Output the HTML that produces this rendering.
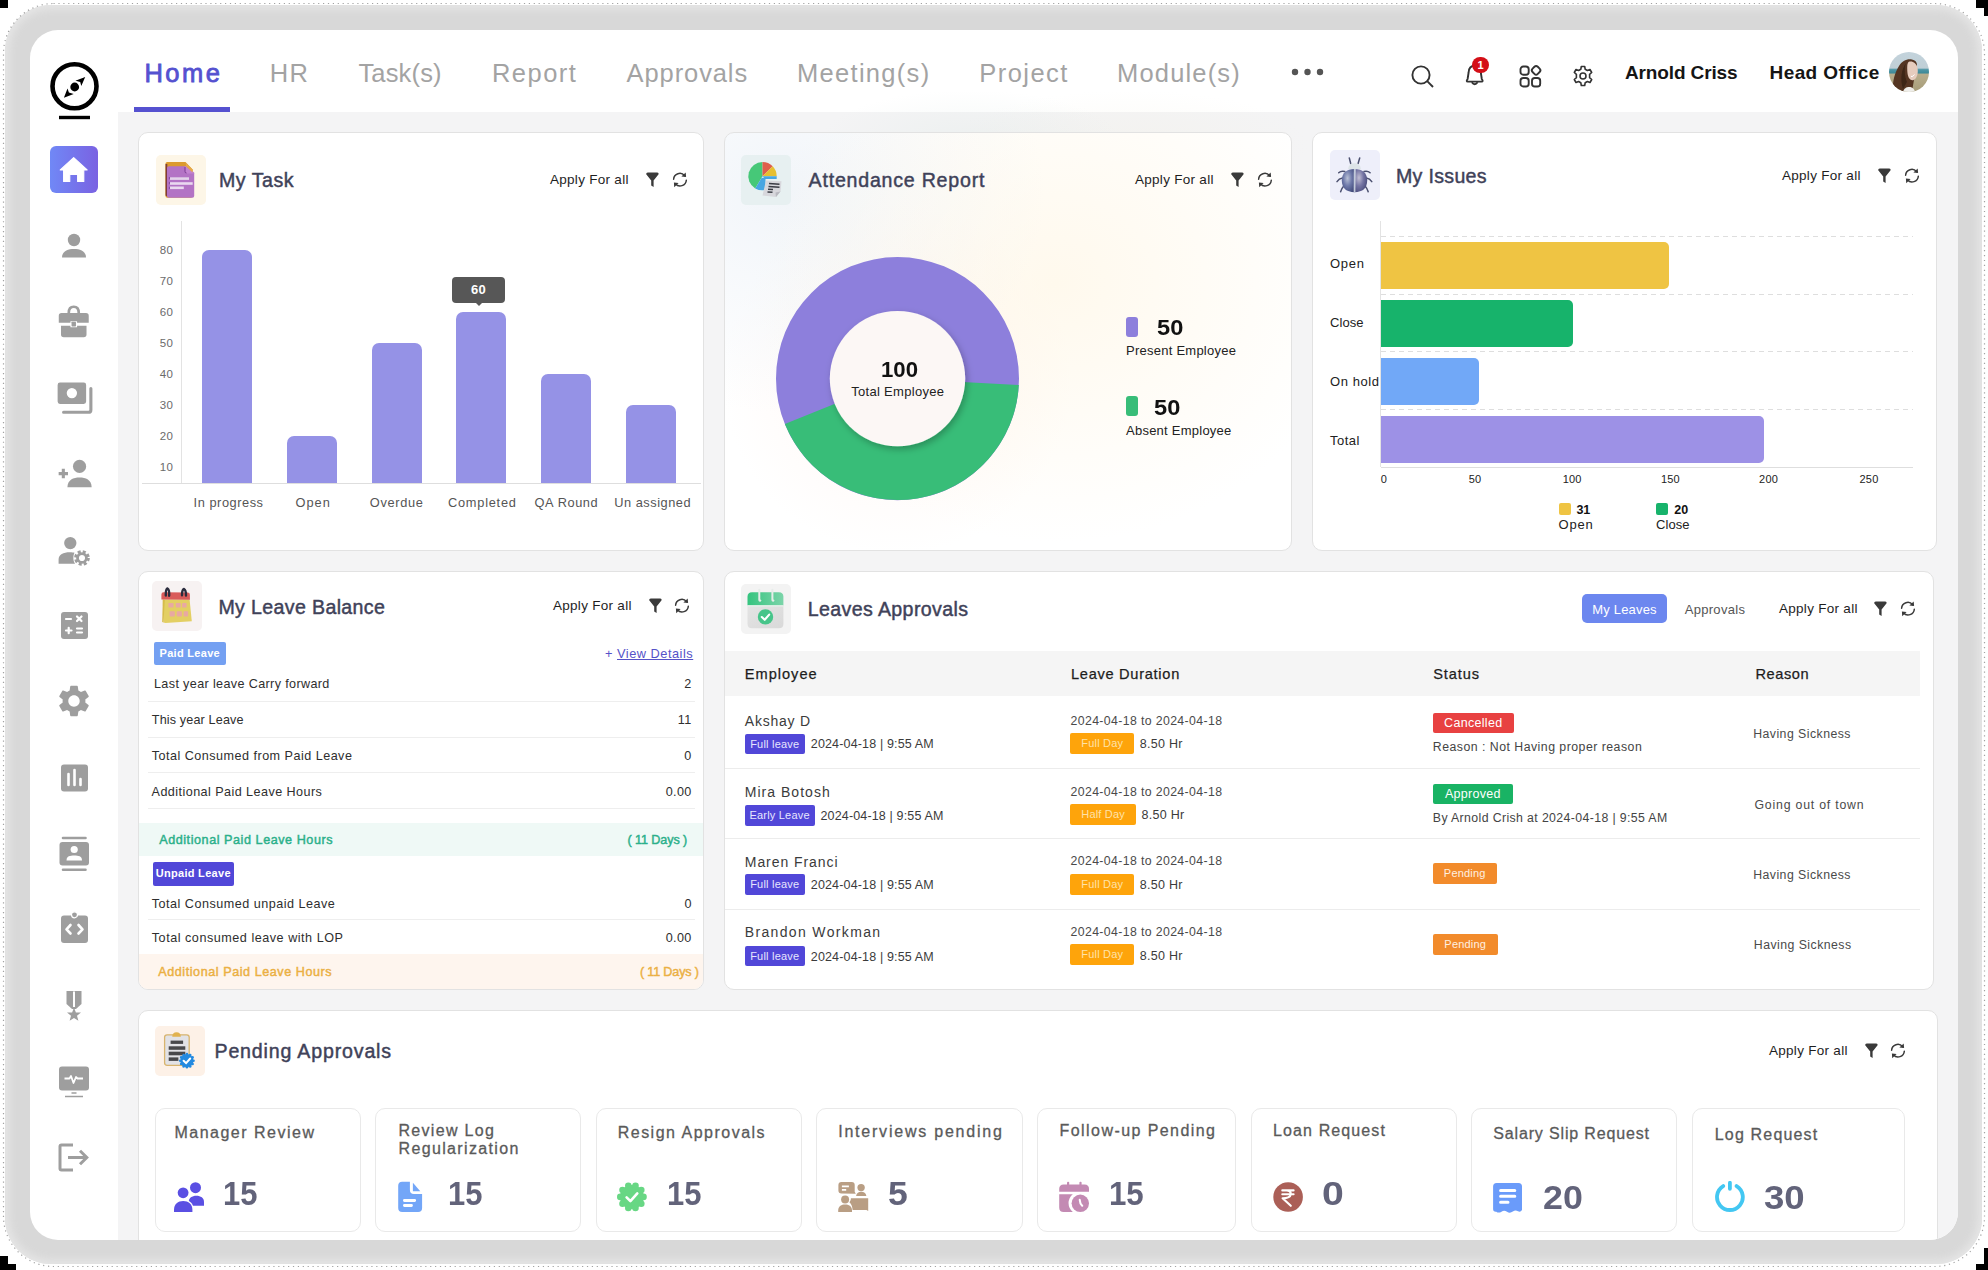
<!DOCTYPE html><html><head><meta charset="utf-8"><style>
*{margin:0;padding:0;box-sizing:border-box}
html,body{width:1988px;height:1270px;overflow:hidden;background:#fff;font-family:"Liberation Sans",sans-serif}
.a{position:absolute}
.t{position:absolute;white-space:nowrap}
.m{-webkit-text-stroke:0.35px currentColor}
.card{position:absolute;background:#fff;border:1px solid #e2e2e2;border-radius:10px}
.ibox{position:absolute;width:50px;height:50px;border-radius:5px}
</style></head><body>
<div class="a" style="left:5px;top:5px;width:1977px;height:1259px;border-radius:46px;background:#d8d8d8;box-shadow:inset 0 0 8px 4px #e6e6e6"></div>
<svg class="a" style="left:0;top:0" width="1988" height="1270"><rect x="3.5" y="3.5" width="1981" height="1263" rx="50" fill="none" stroke="#555" stroke-width="1.2" stroke-dasharray="1.2 3.7" opacity="0.55"/></svg>
<div class="a" style="left:0;top:0;width:8px;height:8px;background:#000"></div>
<div class="a" style="left:1984px;top:1248px;width:4px;height:22px;background:#000"></div><div class="a" style="left:1976px;top:1264px;width:12px;height:6px;background:#000"></div><div class="a" style="left:1976px;top:0;width:12px;height:8px;background:#000"></div><div class="a" style="left:1984px;top:8px;width:4px;height:8px;background:#000"></div><div class="a" style="left:0;top:1256px;width:8px;height:14px;background:#000"></div><div class="a" style="left:8px;top:1264px;width:8px;height:6px;background:#000"></div>
<div class="a" style="left:30px;top:30px;width:1928px;height:1210px;border-radius:28px;background:#fff;overflow:hidden"><div class="a" style="left:-30px;top:-30px;width:1988px;height:1270px">
<div class="a" style="left:118px;top:112px;width:1840px;height:1128px;background:#f4f4f5"></div>
<div class="a" style="left:800px;top:70px;width:520px;height:110px;background:radial-gradient(ellipse 150px 50px at 170px 70px,rgba(215,228,224,0.25) 0%,rgba(255,255,255,0) 100%),radial-gradient(ellipse 180px 55px at 330px 75px,rgba(240,236,220,0.25) 0%,rgba(255,255,255,0) 100%)"></div>
<!-- sidebar -->
<svg class="a" style="left:44px;top:56px" width="62" height="68" viewBox="0 0 62 68">
 <circle cx="30.5" cy="30.2" r="22" fill="none" stroke="#000" stroke-width="4.6"/>
 <path d="M41.2 20.9 L31.4 24.7 L36.2 25.9 L37.3 30 Z M19.9 41.8 L23.5 32.4 L24.9 36.5 L29.7 38 Z" fill="#000"/>
 <circle cx="30.7" cy="31" r="5.9" fill="#fff"/>
 <circle cx="30.7" cy="31" r="4.4" fill="#000"/>
 <rect x="15" y="59.8" width="31" height="3.4" fill="#000"/>
</svg>
<div class="a" style="left:50px;top:146px;width:48px;height:47px;border-radius:6px;background:linear-gradient(90deg,#7088f6,#7a62e2)"></div>
<svg class="a" style="left:58.3px;top:154px" width="31.4" height="31.4" viewBox="0 0 28 28"><path d="M14 3.2 L26 14.2 L23 14.2 L23 24.5 L17.5 24.5 L17.5 18.2 L10.5 18.2 L10.5 24.5 L5 24.5 L5 14.2 L2 14.2 Z" fill="#fff" stroke="#fff" stroke-width="1" stroke-linejoin="round"/></svg>
<svg class="a" style="left:58px;top:230px" width="32" height="32" viewBox="0 0 32 32" fill="#9e9e9e"><circle cx="16" cy="10" r="6.2"/><path d="M4 27.5 C4 21 10 19 16 19 C22 19 28 21 28 27.5 Z"/></svg>
<svg class="a" style="left:56px;top:303.5px" width="35.5" height="35.5" viewBox="0 0 32 32" fill="#9e9e9e"><path d="M11.5 8 C11.5 4 13.5 2.5 16 2.5 C18.5 2.5 20.5 4 20.5 8" fill="none" stroke="#9e9e9e" stroke-width="2.4"/><path d="M2.5 10.5 Q2.5 8 5 8 L27 8 Q29.5 8 29.5 10.5 L29.5 17 L19 17 L19 15.5 L13 15.5 L13 17 L2.5 17 Z"/><path d="M4.5 19.5 L13 19.5 L13 21 L19 21 L19 19.5 L27.5 19.5 L27.5 27.5 Q27.5 30 25 30 L7 30 Q4.5 30 4.5 27.5 Z"/><rect x="14" y="16" width="4" height="4.2" rx="0.5"/></svg>
<svg class="a" style="left:54px;top:378.5px" width="40.5" height="38" viewBox="0 0 34 32" fill="#9e9e9e"><path d="M3 5 Q3 3 5 3 L25 3 Q27 3 27 5 L27 19 Q27 21 25 21 L5 21 Q3 21 3 19 Z M15 7.5 A4.3 4.3 0 1 0 15 16.2 A4.3 4.3 0 1 0 15 7.5 Z" fill-rule="evenodd"/><path d="M31 8 L31 26 Q31 28 29 28 L8 28" fill="none" stroke="#9e9e9e" stroke-width="2.6" stroke-linecap="round"/></svg>
<svg class="a" style="left:56.5px;top:455.5px" width="39.6" height="35.2" viewBox="0 0 36 32" fill="#9e9e9e"><circle cx="20.5" cy="9.5" r="6"/><path d="M9.5 28.5 C9.5 21.5 15 19.5 20.5 19.5 C26 19.5 31.5 21.5 31.5 28.5 Z"/><path d="M1.5 16 L10 16 M5.75 11.7 L5.75 20.3" stroke="#9e9e9e" stroke-width="2.8"/></svg>
<svg class="a" style="left:57px;top:533px" width="34" height="34" viewBox="0 0 32 32" fill="#9e9e9e"><circle cx="12.5" cy="9.5" r="5.8"/><path d="M1.5 29 L1.5 25 C1.5 20 6 18 12 18 C14 18 15.5 18.2 16.5 18.5 C15 21 15 26 17 29 Z"/><g transform="translate(23.5,23.5)"><circle r="5.6" fill="none" stroke="#9e9e9e" stroke-width="3.6" stroke-dasharray="2.6 1.8"/><circle r="4.2" fill="none" stroke="#9e9e9e" stroke-width="2.6"/></g></svg>
<svg class="a" style="left:58px;top:609px" width="32" height="32" viewBox="0 0 32 32" fill="#9e9e9e"><rect x="3" y="3" width="27" height="27" rx="3"/><g stroke="#fff" stroke-width="2.2" stroke-linecap="round"><path d="M8 10 L13 10 M19 7.5 L23.5 12 M23.5 7.5 L19 12 M8 21.5 L13.5 21.5 M10.7 18.8 L10.7 24.2 M19 19.5 L24 19.5 M19 23.5 L24 23.5"/></g></svg>
<svg class="a" style="left:55px;top:682px" width="38" height="38" viewBox="0 0 24 24" fill="#9e9e9e"><path d="M19.14 12.94c.04-.3.06-.61.06-.94 0-.32-.02-.64-.07-.94l2.03-1.58a.49.49 0 0 0 .12-.61l-1.92-3.32a.488.488 0 0 0-.59-.22l-2.39.96c-.5-.38-1.03-.7-1.62-.94l-.36-2.54a.484.484 0 0 0-.48-.41h-3.84c-.24 0-.43.17-.47.41l-.36 2.54c-.59.24-1.13.57-1.62.94l-2.39-.96c-.22-.08-.47 0-.59.22L2.74 8.87c-.12.21-.08.47.12.61l2.03 1.58c-.05.3-.09.63-.09.94s.02.64.07.94l-2.03 1.58a.49.49 0 0 0-.12.61l1.92 3.32c.12.22.37.29.59.22l2.39-.96c.5.38 1.03.7 1.62.94l.36 2.54c.05.24.24.41.48.41h3.84c.24 0 .44-.17.47-.41l.36-2.54c.59-.24 1.13-.56 1.62-.94l2.39.96c.22.08.47 0 .59-.22l1.92-3.32c.12-.22.07-.47-.12-.61l-2.01-1.58zM12 15.6c-1.98 0-3.6-1.62-3.6-3.6s1.62-3.6 3.6-3.6 3.6 1.62 3.6 3.6-1.62 3.6-3.6 3.6z"/></svg>
<svg class="a" style="left:58px;top:762px" width="32" height="32" viewBox="0 0 32 32" fill="#9e9e9e"><rect x="3" y="2.5" width="27" height="27" rx="3"/><g stroke="#fff" stroke-width="2.6" stroke-linecap="round"><path d="M10.5 12 L10.5 23 M16.5 8 L16.5 23 M22.5 17 L22.5 23"/></g></svg>
<svg class="a" style="left:58px;top:836px" width="32" height="36" viewBox="0 0 32 36" fill="#9e9e9e"><rect x="1.5" y="6" width="29.5" height="23.5" rx="3"/><path d="M5 2 L27.5 2 M5 33.8 L27.5 33.8" stroke="#9e9e9e" stroke-width="2.6" stroke-linecap="round"/><circle cx="16.2" cy="13.5" r="3.6" fill="#fff"/><path d="M8.5 24.5 C8.5 20 12 19.5 16.2 19.5 C20.5 19.5 24 20 24 24.5 Z" fill="#fff"/></svg>
<svg class="a" style="left:58px;top:911px" width="32" height="34" viewBox="0 0 32 34" fill="#9e9e9e"><rect x="3" y="4.5" width="27" height="27.5" rx="3"/><circle cx="16.5" cy="3.8" r="3" fill="#9e9e9e" stroke="#fff" stroke-width="1.2"/><path d="M12.5 14 L8.5 18.3 L12.5 22.5 M20.5 14 L24.5 18.3 L20.5 22.5" fill="none" stroke="#fff" stroke-width="2.6" stroke-linecap="round" stroke-linejoin="round"/></svg>
<svg class="a" style="left:62px;top:990px" width="24" height="32" viewBox="0 0 24 32" fill="#9e9e9e"><path d="M4.5 1 L19.5 1 L19.5 14 L14 19 L10 19 L4.5 14 Z"/><path d="M11 1.5 L13 1.5 L13 17 L11 17 Z" fill="#fff"/><path d="M12 17.5 L13.9 22.5 L19 22.6 L15 25.8 L16.4 30.8 L12 28 L7.6 30.8 L9 25.8 L5 22.6 L10.1 22.5 Z"/></svg>
<svg class="a" style="left:58px;top:1066px" width="32" height="32" viewBox="0 0 32 32" fill="#9e9e9e"><rect x="1" y="0.5" width="30" height="24" rx="3"/><path d="M6.5 12.5 L11.5 12.5 L13 10 L15.5 17 L18 11 L19.5 12.5 L25 12.5" fill="none" stroke="#fff" stroke-width="1.8" stroke-linejoin="round"/><path d="M13.5 27 L18.5 27 M7 30.5 L25 30.5" stroke="#9e9e9e" stroke-width="1.7"/></svg>
<svg class="a" style="left:58px;top:1143px" width="32" height="30" viewBox="0 0 32 30" fill="none" stroke="#9e9e9e" stroke-width="3"><path d="M15 2 L3.5 2 Q2 2 2 3.5 L2 25.5 Q2 27 3.5 27 L15 27"/><path d="M10 14.5 L29 14.5 M22 7.8 L28.8 14.5 L22 21.2" stroke-linejoin="miter"/></svg>

<div class="t" style="top:57.6px;font-size:25.5px;color:#5551d0;line-height:30px;letter-spacing:2.467px;left:144.4px;-webkit-text-stroke:0.8px #5551d0">Home</div>
<div class="t" style="top:57.6px;font-size:25.5px;color:#a3a3a3;line-height:30px;letter-spacing:1.2px;left:269.8px;">HR</div>
<div class="t" style="top:57.6px;font-size:25.5px;color:#a3a3a3;line-height:30px;letter-spacing:0.167px;left:358.4px;">Task(s)</div>
<div class="t" style="top:57.6px;font-size:25.5px;color:#a3a3a3;line-height:30px;letter-spacing:1.5px;left:491.9px;">Report</div>
<div class="t" style="top:57.6px;font-size:25.5px;color:#a3a3a3;line-height:30px;letter-spacing:0.9px;left:626.6px;">Approvals</div>
<div class="t" style="top:57.6px;font-size:25.5px;color:#a3a3a3;line-height:30px;letter-spacing:1.3px;left:797.0px;">Meeting(s)</div>
<div class="t" style="top:57.6px;font-size:25.5px;color:#a3a3a3;line-height:30px;letter-spacing:1.433px;left:979.3px;">Project</div>
<div class="t" style="top:57.6px;font-size:25.5px;color:#a3a3a3;line-height:30px;letter-spacing:1.15px;left:1117.1px;">Module(s)</div>
<div class="a" style="left:134px;top:107px;width:96px;height:5px;background:#5551d0"></div>
<svg class="a" style="left:1290px;top:66px" width="36" height="12"><circle cx="5" cy="6" r="3.2" fill="#555"/><circle cx="17.5" cy="6" r="3.2" fill="#555"/><circle cx="30" cy="6" r="3.2" fill="#555"/></svg>
<svg class="a" style="left:1408px;top:62px" width="30" height="30" viewBox="0 0 30 30" fill="none" stroke="#333" stroke-width="1.9"><circle cx="13" cy="13" r="8.6"/><path d="M19.2 19.2 L25 25" stroke-linecap="butt"/></svg>
<svg class="a" style="left:1460px;top:55px" width="36" height="36" viewBox="0 0 36 36" fill="none" stroke="#333" stroke-width="1.9" stroke-linejoin="round"><path d="M7.6 24 L8.6 17.5 C8.8 12.8 11.2 10.8 14.7 10.8 C18.2 10.8 20.6 12.8 20.8 17.5 L21.8 24 Q23.6 26.6 21.6 26.6 L7.8 26.6 Q5.8 26.6 7.6 24 Z"/><path d="M11.8 27.2 Q14.7 31.2 17.6 27.2"/></svg>
<div class="a" style="left:1472.2px;top:56.5px;width:16.6px;height:16.6px;border-radius:50%;background:#d40f17;color:#fff;font-size:11px;font-weight:bold;line-height:16.6px;text-align:center">1</div>
<svg class="a" style="left:1517px;top:63px" width="28" height="28" viewBox="0 0 28 28" fill="none" stroke="#333" stroke-width="1.9"><rect x="3.5" y="3.5" width="8.2" height="8.2" rx="2.8"/><rect x="3.5" y="15" width="8.2" height="8.5" rx="2.8"/><rect x="15" y="15" width="8.2" height="8.5" rx="2.8"/><rect x="15.4" y="3.6" width="7.4" height="7.4" rx="2.4" transform="rotate(45 19.1 7.3)"/></svg>
<svg class="a" style="left:1571px;top:64px" width="24" height="24" viewBox="0 0 24 24" fill="none" stroke="#333" stroke-width="1.6" stroke-linejoin="round"><path d="M10.3 2.5 L13.7 2.5 L14.2 5.3 L16.4 6.5 L19 5.5 L20.7 8.5 L18.6 10.3 L18.6 13.7 L20.7 15.5 L19 18.5 L16.4 17.5 L14.2 18.7 L13.7 21.5 L10.3 21.5 L9.8 18.7 L7.6 17.5 L5 18.5 L3.3 15.5 L5.4 13.7 L5.4 10.3 L3.3 8.5 L5 5.5 L7.6 6.5 L9.8 5.3 Z"/><circle cx="12" cy="12" r="3"/></svg>
<div class="t" style="top:60.6px;font-size:19px;color:#151515;line-height:24px;font-weight:bold;letter-spacing:-0.127px;left:1625px;">Arnold Criss</div>
<div class="t" style="top:60.6px;font-size:19px;color:#151515;line-height:24px;font-weight:bold;letter-spacing:0.42px;left:1769.5px;">Head Office</div>
<svg class="a" style="left:1889px;top:52px" width="40" height="40" viewBox="0 0 40 40"><defs><clipPath id="avc"><circle cx="20" cy="20" r="20"/></clipPath>
<linearGradient id="avsky" x1="0" y1="0" x2="0" y2="1"><stop offset="0" stop-color="#c3d3dc"/><stop offset="0.40" stop-color="#c0cfd6"/><stop offset="0.44" stop-color="#4f96a6"/><stop offset="0.52" stop-color="#3f8a98"/><stop offset="0.56" stop-color="#b8ad8c"/><stop offset="1" stop-color="#a69c78"/></linearGradient>
<filter id="avb"><feGaussianBlur stdDeviation="0.5"/></filter></defs>
<g clip-path="url(#avc)"><rect width="40" height="40" fill="url(#avsky)"/>
<g filter="url(#avb)">
<path d="M4 40 C3 30 6 20 10 14 C13 9 18 6.5 23 7.5 C26 8 28 10 28 13 L26 22 C25 28 24 33 23 40 Z" fill="#553624"/>
<path d="M19.5 10 C23 8.5 27.5 11 28.5 16 C29.5 21 28 26.5 24.5 28 C21.5 29 19 26 18.5 21 C18 16 18 11.5 19.5 10 Z" fill="#e6ccbd"/>
<path d="M17 11 C15 16 15.5 24 18 30 L14 37 C11 29 12 17 17 11 Z" fill="#3e2618"/>
<path d="M25.5 22.5 Q24 25 22 24.5" stroke="#fff" stroke-width="1" fill="none"/>
<path d="M14 40 C15 35.5 18.5 34.5 21.5 35 C24 35.5 25.5 37.5 26 40 Z" fill="#efeeea"/>
</g></g></svg>
<div class="card" style="left:138px;top:132px;width:566px;height:419px;"></div>
<div class="ibox" style="left:156px;top:155px;background:#fdf6e7"></div>
<svg class="a" style="left:156px;top:155px" width="50" height="50" viewBox="0 0 50 50">
<path d="M9.4 9 Q9.4 7 11.4 7 L29.5 7 L36.7 14.5 L36.7 40.5 Q36.7 42.7 34.5 42.7 L11.4 42.7 Q9.4 42.7 9.4 40.7 Z" fill="#dc9a2e"/>
<path d="M9.6 9 L11.3 9 L11.3 41.5 L9.6 40.5 Z" fill="#7c3b3a"/>
<path d="M11 13 Q11 11.3 12.8 11.3 L29 11.3 L38.2 18.1 L38.2 40.9 Q38.2 42.7 36.4 42.7 L12.8 42.7 Q11 42.7 11 40.9 Z" fill="#b373c5"/>
<path d="M28.6 11.3 L29.8 11.3 L38.2 17.4 L38.2 18.4 L30.6 18.4 Q28.6 18.4 28.6 16.4 Z" fill="#c383d1"/>
<path d="M29 12 L29 16.5 Q29 18 30.5 18" fill="none" stroke="#6d3088" stroke-width="0.9"/>
<path d="M29.8 8 L36.5 14.6 L36.5 17.4 L30 11.3 Z" fill="#e6a94a"/>
<rect x="14" y="22.3" width="19" height="2.6" fill="#e3d2ea"/><rect x="14" y="27.2" width="22.7" height="2.6" fill="#ead9f0"/><rect x="14" y="31.5" width="13.8" height="2.6" fill="#ead9f0"/>
<path d="M13.4 22 L13.4 34.5" stroke="#7a3f99" stroke-width="0.8" stroke-dasharray="2.3 2.6"/>
</svg>
<div class="t" style="top:167.3px;font-size:19.6px;color:#3f4259;line-height:26px;letter-spacing:0.517px;left:219px;-webkit-text-stroke:0.45px #3f4259">My Task</div>
<div class="t" style="top:170.3px;font-size:13.5px;color:#1e1e1e;line-height:20px;letter-spacing:0.283px;left:550px;">Apply For all</div>
<svg class="a" style="left:645px;top:172.3px" width="15" height="16" viewBox="0 0 15 16"><path d="M1.2 2.2 Q1 0.5 2.8 0.5 L12.2 0.5 Q14 0.5 13.6 2.2 L8.6 8.5 L8.6 15 L6.2 13.6 L6.2 8.5 Z" fill="#3a3a3a"/></svg>
<svg class="a" style="left:672px;top:172.3px" width="16" height="16" viewBox="0 0 16 16"><g fill="none" stroke="#3a3a3a" stroke-width="1.5" stroke-linecap="round"><path d="M1.6 7.2 A6.2 6.2 0 0 1 12.6 3.7"/><path d="M14.3 8.2 A6.2 6.2 0 0 1 3.4 11.8"/></g><path d="M13.7 0.4 L14.1 5 L9.4 4.5 Z" fill="#3a3a3a"/><path d="M2.2 15.2 L1.9 10.6 L6.6 11 Z" fill="#3a3a3a"/></svg>
<div class="a" style="left:181px;top:221px;width:1px;height:262px;background:#e3e3e3"></div>
<div class="a" style="left:142px;top:483px;width:559px;height:1px;background:#dedede"></div>
<div class="t" style="top:460.0px;font-size:11.5px;color:#6b6b6b;line-height:14px;letter-spacing:0.2px;right:1815px;">10</div>
<div class="t" style="top:429.0px;font-size:11.5px;color:#6b6b6b;line-height:14px;letter-spacing:0.2px;right:1815px;">20</div>
<div class="t" style="top:398.0px;font-size:11.5px;color:#6b6b6b;line-height:14px;letter-spacing:0.2px;right:1815px;">30</div>
<div class="t" style="top:367.0px;font-size:11.5px;color:#6b6b6b;line-height:14px;letter-spacing:0.2px;right:1815px;">40</div>
<div class="t" style="top:336.0px;font-size:11.5px;color:#6b6b6b;line-height:14px;letter-spacing:0.2px;right:1815px;">50</div>
<div class="t" style="top:305.0px;font-size:11.5px;color:#6b6b6b;line-height:14px;letter-spacing:0.2px;right:1815px;">60</div>
<div class="t" style="top:274.0px;font-size:11.5px;color:#6b6b6b;line-height:14px;letter-spacing:0.2px;right:1815px;">70</div>
<div class="t" style="top:243.0px;font-size:11.5px;color:#6b6b6b;line-height:14px;letter-spacing:0.2px;right:1815px;">80</div>
<div class="a" style="left:202px;top:250.0px;width:50px;height:233.0px;background:#9592e6;border-radius:7px 7px 0 0"></div>
<div class="t" style="top:494.0px;font-size:12.8px;color:#555;line-height:18px;letter-spacing:0.54px;left:193.6px;">In progress</div>
<div class="a" style="left:287px;top:436.0px;width:50px;height:47.0px;background:#9592e6;border-radius:7px 7px 0 0"></div>
<div class="t" style="top:494.0px;font-size:12.8px;color:#555;line-height:18px;letter-spacing:1.033px;left:295.4px;">Open</div>
<div class="a" style="left:372px;top:343.0px;width:50px;height:140.0px;background:#9592e6;border-radius:7px 7px 0 0"></div>
<div class="t" style="top:494.0px;font-size:12.8px;color:#555;line-height:18px;letter-spacing:0.667px;left:369.8px;">Overdue</div>
<div class="a" style="left:456px;top:312.0px;width:50px;height:171.0px;background:#9592e6;border-radius:7px 7px 0 0"></div>
<div class="t" style="top:494.0px;font-size:12.8px;color:#555;line-height:18px;letter-spacing:0.75px;left:448px;">Completed</div>
<div class="a" style="left:541px;top:374.0px;width:50px;height:109.0px;background:#9592e6;border-radius:7px 7px 0 0"></div>
<div class="t" style="top:494.0px;font-size:12.8px;color:#555;line-height:18px;letter-spacing:0.571px;left:534.6px;">QA Round</div>
<div class="a" style="left:626px;top:405.0px;width:50px;height:78.0px;background:#9592e6;border-radius:7px 7px 0 0"></div>
<div class="t" style="top:494.0px;font-size:12.8px;color:#555;line-height:18px;letter-spacing:0.51px;left:614.3px;">Un assigned</div>
<div class="a" style="left:452px;top:277px;width:53px;height:26px;border-radius:4px;background:#575757"></div>
<div class="a" style="left:474px;top:301px;width:0;height:0;border-left:5px solid transparent;border-right:5px solid transparent;border-top:5px solid #575757"></div>
<div class="t" style="top:281.0px;font-size:13px;color:#fff;line-height:18px;font-weight:bold;letter-spacing:0.3px;left:178.5px;width:600px;text-align:center;">60</div>
<div class="card" style="left:724px;top:132px;width:568px;height:419px;background:radial-gradient(ellipse 300px 260px at 330px 150px,rgba(255,244,222,0.55) 0%,rgba(255,255,255,0) 100%),radial-gradient(ellipse 260px 220px at 60px 60px,rgba(240,244,249,0.9) 0%,rgba(255,255,255,0) 100%),radial-gradient(circle 175px at 172px 246px,rgba(255,236,228,0.45) 0%,rgba(255,255,255,0) 100%),#fff"></div>
<div class="ibox" style="left:741px;top:155px;background:#e7f0f1"></div>
<svg class="a" style="left:740.7px;top:155px" width="50" height="50" viewBox="0 0 50 50">
<path d="M21.5 21.2 L21.5 7 A14.2 14.2 0 0 0 14.2 33.4 Z" fill="#46c878"/>
<path d="M21.5 21.2 L21.5 7 A14.2 14.2 0 0 1 31.7 11.3 Z" fill="#df5f4c"/>
<path d="M21.5 21.2 L31.7 11.3 A14.2 14.2 0 0 1 35.7 21.2 Z" fill="#e7bf30"/>
<path d="M21.5 21.2 L35.7 21.2 L35.7 24 L24.5 24 L24.5 35 A14.2 14.2 0 0 1 14.2 33.4 Z" fill="#48a6e2"/>
<path d="M20.8 23 L21.8 21.5 L23 22.5 Z" fill="#fff"/>
<path d="M25 25.5 L40.5 26.2 L39.5 36.5 L35 42 L21.5 40.5 Z" fill="#d7d7dc"/>
<path d="M35 42 L39.5 36.5 L34.5 37.5 Z" fill="#b9b9c0"/>
<g stroke="#3b3d45" stroke-width="1.5"><path d="M28 28.5 L38.5 29.2 M27.5 31.5 L38.5 32.2 M27 34.3 L32 34.6 M26.5 37 L31.5 37.3"/></g>
</svg>
<div class="t" style="top:167.3px;font-size:19.6px;color:#3f4259;line-height:26px;letter-spacing:0.775px;left:808.6px;-webkit-text-stroke:0.45px #3f4259">Attendance Report</div>
<div class="t" style="top:170.3px;font-size:13.5px;color:#1e1e1e;line-height:20px;letter-spacing:0.283px;left:1135px;">Apply For all</div>
<svg class="a" style="left:1230px;top:172.3px" width="15" height="16" viewBox="0 0 15 16"><path d="M1.2 2.2 Q1 0.5 2.8 0.5 L12.2 0.5 Q14 0.5 13.6 2.2 L8.6 8.5 L8.6 15 L6.2 13.6 L6.2 8.5 Z" fill="#3a3a3a"/></svg>
<svg class="a" style="left:1257px;top:172.3px" width="16" height="16" viewBox="0 0 16 16"><g fill="none" stroke="#3a3a3a" stroke-width="1.5" stroke-linecap="round"><path d="M1.6 7.2 A6.2 6.2 0 0 1 12.6 3.7"/><path d="M14.3 8.2 A6.2 6.2 0 0 1 3.4 11.8"/></g><path d="M13.7 0.4 L14.1 5 L9.4 4.5 Z" fill="#3a3a3a"/><path d="M2.2 15.2 L1.9 10.6 L6.6 11 Z" fill="#3a3a3a"/></svg>
<svg class="a" style="left:760px;top:241px" width="280" height="280" viewBox="0 0 280 280">
<defs><filter id="ish" x="-30%" y="-30%" width="160%" height="160%"><feDropShadow dx="2" dy="3" stdDeviation="3.5" flood-color="#000" flood-opacity="0.26"/></filter></defs>
<g transform="translate(137.5,137.6)">
<path d="M121.5 0 A121.5 121.5 0 1 1 -121.5 0 A121.5 121.5 0 1 1 121.5 0 Z" fill="#8d7fdc"/>
<path d="M0 0 L121.33 6.36 A121.5 121.5 0 0 1 -112.65 45.51 Z" fill="#38bd78"/>
<circle r="67.7" fill="#fcf7f5" filter="url(#ish)"/>
</g></svg>
<div class="t" style="top:358.0px;font-size:21.5px;color:#111;line-height:24px;font-weight:bold;left:880.5px;transform:scaleX(1.0326);transform-origin:0 0;">100</div>
<div class="t" style="top:382.5px;font-size:13px;color:#222;line-height:18px;letter-spacing:0.292px;left:851.3px;">Total Employee</div>
<div class="a" style="left:1125.5px;top:317px;width:12.5px;height:19.5px;border-radius:3px;background:#8d7fdc"></div>
<div class="t" style="top:316.0px;font-size:21.5px;color:#111;line-height:24px;font-weight:bold;left:1157.3px;transform:scaleX(1.0982);transform-origin:0 0;">50</div>
<div class="t" style="top:342.3px;font-size:13px;color:#222;line-height:18px;letter-spacing:0.247px;left:1126px;">Present Employee</div>
<div class="a" style="left:1125.5px;top:396px;width:12.5px;height:20px;border-radius:3px;background:#38bd78"></div>
<div class="t" style="top:395.8px;font-size:21.5px;color:#111;line-height:24px;font-weight:bold;left:1153.5px;transform:scaleX(1.0982);transform-origin:0 0;">50</div>
<div class="t" style="top:421.8px;font-size:13px;color:#222;line-height:18px;letter-spacing:0.243px;left:1126px;">Absent Employee</div>
<div class="card" style="left:1312px;top:132px;width:625px;height:419px;"></div>
<div class="ibox" style="left:1330px;top:150px;background:#eeeffa"></div>
<svg class="a" style="left:1330px;top:150px" width="50" height="50" viewBox="0 0 50 50">
<defs><radialGradient id="bugL" cx="0.45" cy="0.4" r="0.75"><stop offset="0" stop-color="#b9c1d6"/><stop offset="0.45" stop-color="#6e79a9"/><stop offset="1" stop-color="#394272"/></radialGradient>
<radialGradient id="bugR" cx="0.35" cy="0.38" r="0.8"><stop offset="0" stop-color="#c2bfd4"/><stop offset="0.45" stop-color="#7474a3"/><stop offset="1" stop-color="#3d4070"/></radialGradient></defs>
<g stroke="#4c5170" stroke-width="1.5" fill="none" stroke-linecap="round"><path d="M20.7 13.5 L19.3 8 M28.1 13.5 L29.7 8 M14.8 21.5 Q11 20.5 8.7 22.8 M12.5 28 Q9 28.5 7 31.6 M13.4 36.5 Q11.5 38.5 10.6 41.8 M34 21.5 Q37.8 20.5 40.1 22.8 M36.3 28 Q39.8 28.5 41.8 31.6 M35.4 36.5 Q37.3 38.5 38.2 41.8"/></g>
<path d="M18.1 18.9 Q18.6 13.2 24.5 13.2 Q30.4 13.2 30.9 18.9 Z" fill="#dde4e8"/>
<path d="M24.5 18.9 L24.5 42.3 Q12 42 11.8 30.6 Q12 19 24.5 18.9 Z" fill="url(#bugL)"/>
<path d="M24.5 18.9 L24.5 42.3 Q37 42 37.2 30.6 Q37 19 24.5 18.9 Z" fill="url(#bugR)"/>
<path d="M23.8 19 L25.8 19 L25.4 42.3 L23.7 42.3 Z" fill="#c1c9d9"/>
</svg>
<div class="t" style="top:162.8px;font-size:19.6px;color:#3f4259;line-height:26px;letter-spacing:0.3px;left:1396px;-webkit-text-stroke:0.45px #3f4259">My Issues</div>
<div class="t" style="top:165.5px;font-size:13.5px;color:#1e1e1e;line-height:20px;letter-spacing:0.283px;left:1782px;">Apply For all</div>
<svg class="a" style="left:1877px;top:167.5px" width="15" height="16" viewBox="0 0 15 16"><path d="M1.2 2.2 Q1 0.5 2.8 0.5 L12.2 0.5 Q14 0.5 13.6 2.2 L8.6 8.5 L8.6 15 L6.2 13.6 L6.2 8.5 Z" fill="#3a3a3a"/></svg>
<svg class="a" style="left:1904px;top:167.5px" width="16" height="16" viewBox="0 0 16 16"><g fill="none" stroke="#3a3a3a" stroke-width="1.5" stroke-linecap="round"><path d="M1.6 7.2 A6.2 6.2 0 0 1 12.6 3.7"/><path d="M14.3 8.2 A6.2 6.2 0 0 1 3.4 11.8"/></g><path d="M13.7 0.4 L14.1 5 L9.4 4.5 Z" fill="#3a3a3a"/><path d="M2.2 15.2 L1.9 10.6 L6.6 11 Z" fill="#3a3a3a"/></svg>
<div class="a" style="left:1380px;top:221px;width:1px;height:246px;background:#e3e3e3"></div>
<div class="a" style="left:1381px;top:236px;width:532px;height:1px;background:repeating-linear-gradient(90deg,#dedede 0 5px,transparent 5px 9px)"></div>
<div class="a" style="left:1381px;top:293.5px;width:532px;height:1px;background:repeating-linear-gradient(90deg,#dedede 0 5px,transparent 5px 9px)"></div>
<div class="a" style="left:1381px;top:351px;width:532px;height:1px;background:repeating-linear-gradient(90deg,#dedede 0 5px,transparent 5px 9px)"></div>
<div class="a" style="left:1381px;top:409px;width:532px;height:1px;background:repeating-linear-gradient(90deg,#dedede 0 5px,transparent 5px 9px)"></div>
<div class="a" style="left:1381px;top:466.5px;width:532px;height:1px;background:#dedede"></div>
<div class="a" style="left:1381px;top:241.9px;width:287.8px;height:47.3px;background:#efc443;border-radius:0 5px 5px 0"></div>
<div class="t" style="top:255.0px;font-size:13px;color:#222;line-height:18px;letter-spacing:0.7px;left:1330px;">Open</div>
<div class="a" style="left:1381px;top:299.8px;width:191.9px;height:47.3px;background:#17b36b;border-radius:0 5px 5px 0"></div>
<div class="t" style="top:313.8px;font-size:13px;color:#222;line-height:18px;letter-spacing:0.05px;left:1330px;">Close</div>
<div class="a" style="left:1381px;top:357.6px;width:98.2px;height:47.3px;background:#71a8f7;border-radius:0 5px 5px 0"></div>
<div class="t" style="top:372.8px;font-size:13px;color:#222;line-height:18px;letter-spacing:0.583px;left:1330px;">On hold</div>
<div class="a" style="left:1381px;top:415.6px;width:382.5px;height:47.3px;background:#9d91e6;border-radius:0 5px 5px 0"></div>
<div class="t" style="top:431.7px;font-size:13px;color:#222;line-height:18px;letter-spacing:0.5px;left:1330px;">Total</div>
<div class="t" style="top:471.7px;font-size:11px;color:#222;line-height:14px;letter-spacing:0.2px;left:1084px;width:600px;text-align:center;">0</div>
<div class="t" style="top:471.7px;font-size:11px;color:#222;line-height:14px;letter-spacing:0.2px;left:1175px;width:600px;text-align:center;">50</div>
<div class="t" style="top:471.7px;font-size:11px;color:#222;line-height:14px;letter-spacing:0.2px;left:1272.2px;width:600px;text-align:center;">100</div>
<div class="t" style="top:471.7px;font-size:11px;color:#222;line-height:14px;letter-spacing:0.2px;left:1370.4px;width:600px;text-align:center;">150</div>
<div class="t" style="top:471.7px;font-size:11px;color:#222;line-height:14px;letter-spacing:0.2px;left:1468.6px;width:600px;text-align:center;">200</div>
<div class="t" style="top:471.7px;font-size:11px;color:#222;line-height:14px;letter-spacing:0.2px;left:1569px;width:600px;text-align:center;">250</div>
<div class="a" style="left:1558.7px;top:503px;width:12px;height:12px;border-radius:2px;background:#efc443"></div>
<div class="t" style="top:501.5px;font-size:12.5px;color:#111;line-height:16px;font-weight:bold;left:1576.4px;">31</div>
<div class="t" style="top:516.0px;font-size:13px;color:#222;line-height:18px;letter-spacing:0.8px;left:1558.5px;">Open</div>
<div class="a" style="left:1656px;top:503px;width:12px;height:12px;border-radius:2px;background:#17b36b"></div>
<div class="t" style="top:501.5px;font-size:12.5px;color:#111;line-height:16px;font-weight:bold;left:1674.3px;">20</div>
<div class="t" style="top:516.0px;font-size:13px;color:#222;line-height:18px;letter-spacing:0.05px;left:1656px;">Close</div>
<div class="card" style="left:138px;top:571px;width:566px;height:419px;overflow:hidden"></div>
<div class="ibox" style="left:152px;top:581px;background:#f7f2f2"></div>
<svg class="a" style="left:152px;top:581px" width="50" height="50" viewBox="0 0 50 50">
<path d="M10.8 18.6 L37.6 18.6 L39.8 40.2 L13.5 42 L11.5 41.5 Z" fill="#e3cf63"/>
<path d="M11.5 41.5 L12.8 19 L10.8 18.6 L10.2 41 Z" fill="#d6bc4a"/>
<path d="M9.4 13.5 Q9.4 11.3 11.6 11.3 L35.7 11.6 Q37.9 11.6 37.9 13.8 L37.9 18.8 L9.4 18.6 Z" fill="#d95b5a"/>
<g fill="#e8a9a2"><rect x="16.4" y="22" width="5.2" height="4.6" rx="0.6"/><rect x="23.8" y="22" width="4.9" height="4.6" rx="0.6"/><rect x="30.1" y="22" width="4.5" height="4.6" rx="0.6"/><rect x="17.6" y="30.2" width="5.2" height="5.2" rx="0.6"/><rect x="24.7" y="30.2" width="5.2" height="5.2" rx="0.6"/><rect x="31.6" y="30.2" width="4.5" height="5.2" rx="0.6"/></g>
<g stroke="#2b2c3d" stroke-width="2.4" fill="none" stroke-linecap="round"><path d="M13.8 14.5 Q13.6 8 15.5 7.5 Q17.5 8.5 17.2 14.8"/><path d="M30 14.2 Q30 8.5 32 8 Q34 9 34 14.5"/></g>
</svg>
<div class="t" style="top:593.8px;font-size:19.6px;color:#3f4259;line-height:26px;letter-spacing:0.353px;left:218.4px;-webkit-text-stroke:0.45px #3f4259">My Leave Balance</div>
<div class="t" style="top:596.0px;font-size:13.5px;color:#1e1e1e;line-height:20px;letter-spacing:0.283px;left:553px;">Apply For all</div>
<svg class="a" style="left:648px;top:598px" width="15" height="16" viewBox="0 0 15 16"><path d="M1.2 2.2 Q1 0.5 2.8 0.5 L12.2 0.5 Q14 0.5 13.6 2.2 L8.6 8.5 L8.6 15 L6.2 13.6 L6.2 8.5 Z" fill="#3a3a3a"/></svg>
<svg class="a" style="left:674px;top:598px" width="16" height="16" viewBox="0 0 16 16"><g fill="none" stroke="#3a3a3a" stroke-width="1.5" stroke-linecap="round"><path d="M1.6 7.2 A6.2 6.2 0 0 1 12.6 3.7"/><path d="M14.3 8.2 A6.2 6.2 0 0 1 3.4 11.8"/></g><path d="M13.7 0.4 L14.1 5 L9.4 4.5 Z" fill="#3a3a3a"/><path d="M2.2 15.2 L1.9 10.6 L6.6 11 Z" fill="#3a3a3a"/></svg>
<div class="a" style="left:154px;top:641.7px;width:71.5px;height:23.3px;border-radius:2px;background:#74a0f2;color:#fff;font-size:11px;font-weight:bold;line-height:23px;text-align:center;letter-spacing:0.3px">Paid Leave</div>
<div class="t" style="top:645.2px;font-size:12.8px;color:#5552c8;line-height:18px;letter-spacing:0.5px;left:605px;">+ <span style="text-decoration:underline">View Details</span></div>
<div class="t" style="top:675.3px;font-size:12.6px;color:#2e2e2e;line-height:18px;letter-spacing:0.364px;left:154px;">Last year leave Carry forward</div>
<div class="t" style="top:675.3px;font-size:12.6px;color:#2e2e2e;line-height:18px;letter-spacing:0.3px;right:1296.5px;">2</div>
<div class="t" style="top:711.2px;font-size:12.6px;color:#2e2e2e;line-height:18px;letter-spacing:0.15px;left:151.8px;">This year Leave</div>
<div class="t" style="top:711.2px;font-size:12.6px;color:#2e2e2e;line-height:18px;letter-spacing:0.3px;right:1296.5px;">11</div>
<div class="t" style="top:747.0px;font-size:12.6px;color:#2e2e2e;line-height:18px;letter-spacing:0.479px;left:151.8px;">Total Consumed from Paid Leave</div>
<div class="t" style="top:747.0px;font-size:12.6px;color:#2e2e2e;line-height:18px;letter-spacing:0.3px;right:1296.5px;">0</div>
<div class="t" style="top:782.9px;font-size:12.6px;color:#2e2e2e;line-height:18px;letter-spacing:0.438px;left:151.6px;">Additional Paid Leave Hours</div>
<div class="t" style="top:782.9px;font-size:12.6px;color:#2e2e2e;line-height:18px;letter-spacing:0.3px;right:1296.5px;">0.00</div>
<div class="a" style="left:148px;top:700.9px;width:547px;height:1px;background:#eeeeee"></div>
<div class="a" style="left:148px;top:736.5px;width:547px;height:1px;background:#eeeeee"></div>
<div class="a" style="left:148px;top:772.4px;width:547px;height:1px;background:#eeeeee"></div>
<div class="a" style="left:148px;top:808.2px;width:547px;height:1px;background:#eeeeee"></div>
<div class="a" style="left:139px;top:822.5px;width:564px;height:33px;background:#eff9f6"></div>
<div class="t" style="top:831.0px;font-size:12.6px;color:#2bb08a;line-height:18px;letter-spacing:0.554px;left:159.2px;-webkit-text-stroke:0.45px #2bb08a">Additional Paid Leave Hours</div>
<div class="t" style="top:831.0px;font-size:12.6px;color:#2bb08a;line-height:18px;letter-spacing:-0.08px;left:627.4px;-webkit-text-stroke:0.45px #2bb08a">( 11 Days )</div>
<div class="a" style="left:152.5px;top:862.2px;width:81.5px;height:23.6px;border-radius:2px;background:#5147d8;color:#fff;font-size:11px;font-weight:bold;line-height:23.6px;text-align:center;letter-spacing:0.3px">Unpaid Leave</div>
<div class="t" style="top:894.6px;font-size:12.6px;color:#2e2e2e;line-height:18px;letter-spacing:0.496px;left:151.8px;">Total Consumed unpaid Leave</div>
<div class="t" style="top:894.6px;font-size:12.6px;color:#2e2e2e;line-height:18px;right:1296.5px;">0</div>
<div class="a" style="left:148px;top:919.4px;width:547px;height:1px;background:#eeeeee"></div>
<div class="t" style="top:928.7px;font-size:12.6px;color:#2e2e2e;line-height:18px;letter-spacing:0.525px;left:151.8px;">Total consumed leave with LOP</div>
<div class="t" style="top:928.7px;font-size:12.6px;color:#2e2e2e;line-height:18px;letter-spacing:0.3px;right:1296.5px;">0.00</div>
<div class="a" style="left:139px;top:954.4px;width:564px;height:34.6px;background:#fef5ee;border-radius:0 0 9px 9px"></div>
<div class="t" style="top:962.6px;font-size:12.6px;color:#ebb043;line-height:18px;letter-spacing:0.554px;left:158.3px;-webkit-text-stroke:0.45px #ebb043">Additional Paid Leave Hours</div>
<div class="t" style="top:962.6px;font-size:12.6px;color:#ebb043;line-height:18px;letter-spacing:-0.16px;left:639.9px;-webkit-text-stroke:0.45px #ebb043">( 11 Days )</div>
<div class="card" style="left:724px;top:571px;width:1210px;height:419px;"></div>
<div class="ibox" style="left:740.5px;top:583.6px;background:#f3f3f3"></div>
<svg class="a" style="left:740.5px;top:583.6px" width="50" height="50" viewBox="0 0 50 50">
<defs><linearGradient id="cg" x1="0" y1="0" x2="1" y2="0"><stop offset="0" stop-color="#35c47f"/><stop offset="1" stop-color="#7bd4a9"/></linearGradient>
<linearGradient id="cgb" x1="0" y1="0" x2="1" y2="1"><stop offset="0" stop-color="#e4e4e4"/><stop offset="1" stop-color="#d9d9d9"/></linearGradient></defs>
<path d="M6.5 21 L42.4 21 L42.4 39.7 Q42.4 44.2 37.9 44.2 L11 44.2 Q6.5 44.2 6.5 39.7 Z" fill="url(#cgb)"/>
<path d="M6.5 12.8 Q6.5 8.3 11 8.3 L37.9 8.3 Q42.4 8.3 42.4 12.8 L42.4 21.3 L6.5 21.3 Z" fill="url(#cg)"/>
<rect x="6.5" y="21.3" width="35.9" height="1.2" fill="#e3f3ea"/>
<g stroke="#e6ece9" stroke-width="2" fill="none" stroke-linecap="round"><path d="M18.3 5.8 L18.3 15.5 Q18.3 17 19.3 16.5 M31.4 5.8 L31.4 15.5 Q31.4 17 32.4 16.5"/></g>
<circle cx="24.5" cy="32.9" r="7.7" fill="#47c58a"/>
<path d="M20.8 33 L23.7 35.8 L28.2 30.6" stroke="#fff" stroke-width="2.1" fill="none" stroke-linecap="round" stroke-linejoin="round"/>
</svg>
<div class="t" style="top:596.2px;font-size:19.6px;color:#3f4259;line-height:26px;letter-spacing:0.38px;left:807.7px;-webkit-text-stroke:0.45px #3f4259">Leaves Approvals</div>
<div class="a" style="left:1581.6px;top:593.6px;width:85.8px;height:29.9px;border-radius:5px;background:#6c87ef;color:#fff;font-size:13px;line-height:32px;text-align:center;letter-spacing:0.2px">My Leaves</div>
<div class="t" style="top:601.4px;font-size:13px;color:#555;line-height:18px;letter-spacing:0.3px;left:1684.7px;">Approvals</div>
<div class="t" style="top:599.4px;font-size:13.5px;color:#1e1e1e;line-height:20px;letter-spacing:0.283px;left:1779px;">Apply For all</div>
<svg class="a" style="left:1873px;top:601.4px" width="15" height="16" viewBox="0 0 15 16"><path d="M1.2 2.2 Q1 0.5 2.8 0.5 L12.2 0.5 Q14 0.5 13.6 2.2 L8.6 8.5 L8.6 15 L6.2 13.6 L6.2 8.5 Z" fill="#3a3a3a"/></svg>
<svg class="a" style="left:1900px;top:601.4px" width="16" height="16" viewBox="0 0 16 16"><g fill="none" stroke="#3a3a3a" stroke-width="1.5" stroke-linecap="round"><path d="M1.6 7.2 A6.2 6.2 0 0 1 12.6 3.7"/><path d="M14.3 8.2 A6.2 6.2 0 0 1 3.4 11.8"/></g><path d="M13.7 0.4 L14.1 5 L9.4 4.5 Z" fill="#3a3a3a"/><path d="M2.2 15.2 L1.9 10.6 L6.6 11 Z" fill="#3a3a3a"/></svg>
<div class="a" style="left:725px;top:651px;width:1195px;height:45px;background:#f5f5f5"></div>
<div class="t" style="top:664.0px;font-size:14.6px;color:#1d1d1d;line-height:20px;letter-spacing:0.986px;left:744.8px;-webkit-text-stroke:0.25px #1d1d1d">Employee</div>
<div class="t" style="top:664.0px;font-size:14.6px;color:#1d1d1d;line-height:20px;letter-spacing:0.715px;left:1071px;-webkit-text-stroke:0.25px #1d1d1d">Leave Duration</div>
<div class="t" style="top:664.0px;font-size:14.6px;color:#1d1d1d;line-height:20px;letter-spacing:0.88px;left:1433.2px;-webkit-text-stroke:0.25px #1d1d1d">Status</div>
<div class="t" style="top:664.0px;font-size:14.6px;color:#1d1d1d;line-height:20px;letter-spacing:0.6px;left:1755.4px;-webkit-text-stroke:0.25px #1d1d1d">Reason</div>
<div class="t" style="top:711.1px;font-size:14px;color:#3b3b3b;line-height:20px;letter-spacing:0.757px;left:744.8px;">Akshay D</div>
<div class="a" style="left:744.5px;top:733.7px;width:60.5px;height:20.3px;border-radius:2px;background:#5147d8;color:#e6e6ff;font-size:11px;line-height:20.3px;text-align:center;letter-spacing:0.2px">Full leave</div>
<div class="t" style="top:735.1px;font-size:12.5px;color:#3b3b3b;line-height:18px;letter-spacing:0.153px;left:810.8px;">2024-04-18 | 9:55 AM</div>
<div class="t" style="top:711.5px;font-size:12.3px;color:#4a4a4a;line-height:18px;letter-spacing:0.374px;left:1070.5px;">2024-04-18 to 2024-04-18</div>
<div class="a" style="left:1070.3px;top:733px;width:64px;height:20.9px;border-radius:2px;background:#fea40b;color:#ffe2a8;font-size:11px;line-height:21px;text-align:center;letter-spacing:0.2px">Full Day</div>
<div class="t" style="top:735.0px;font-size:12.5px;color:#3b3b3b;line-height:18px;letter-spacing:0.283px;left:1139.8px;">8.50 Hr</div>
<div class="a" style="left:1432.5px;top:713.1px;width:81.5px;height:20.4px;border-radius:2px;background:#e84141;color:#fff;font-size:12.5px;line-height:20.4px;text-align:center;letter-spacing:0.3px">Cancelled</div>
<div class="t" style="top:737.7px;font-size:12.3px;color:#444;line-height:18px;letter-spacing:0.484px;left:1432.8px;">Reason : Not Having proper reason</div>
<div class="t" style="top:725.2px;font-size:12.3px;color:#4a4a4a;line-height:18px;letter-spacing:0.457px;left:1753.2px;">Having Sickness</div>
<div class="a" style="left:725px;top:767.6px;width:1195px;height:1px;background:#ececec"></div>
<div class="t" style="top:781.5px;font-size:14px;color:#3b3b3b;line-height:20px;letter-spacing:1.02px;left:744.8px;">Mira Botosh</div>
<div class="a" style="left:744.5px;top:805.3px;width:70.2px;height:20.3px;border-radius:2px;background:#5147d8;color:#e6e6ff;font-size:11px;line-height:20.3px;text-align:center;letter-spacing:0.2px">Early Leave</div>
<div class="t" style="top:807.0px;font-size:12.5px;color:#3b3b3b;line-height:18px;letter-spacing:0.153px;left:820.5px;">2024-04-18 | 9:55 AM</div>
<div class="t" style="top:782.5px;font-size:12.3px;color:#4a4a4a;line-height:18px;letter-spacing:0.374px;left:1070.5px;">2024-04-18 to 2024-04-18</div>
<div class="a" style="left:1070.3px;top:803.8px;width:65.7px;height:20.9px;border-radius:2px;background:#fea40b;color:#ffe2a8;font-size:11px;line-height:21px;text-align:center;letter-spacing:0.2px">Half Day</div>
<div class="t" style="top:805.8px;font-size:12.5px;color:#3b3b3b;line-height:18px;letter-spacing:0.283px;left:1141.5px;">8.50 Hr</div>
<div class="a" style="left:1432.5px;top:783.8px;width:80.8px;height:20.4px;border-radius:2px;background:#19b364;color:#fff;font-size:12.5px;line-height:20.4px;text-align:center;letter-spacing:0.3px">Approved</div>
<div class="t" style="top:808.5px;font-size:12.3px;color:#444;line-height:18px;letter-spacing:0.382px;left:1432.8px;">By Arnold Crish at 2024-04-18 | 9:55 AM</div>
<div class="t" style="top:795.9px;font-size:12.3px;color:#4a4a4a;line-height:18px;letter-spacing:0.794px;left:1754.5px;">Going out of town</div>
<div class="a" style="left:725px;top:838.3px;width:1195px;height:1px;background:#ececec"></div>
<div class="t" style="top:852.0px;font-size:14px;color:#3b3b3b;line-height:20px;letter-spacing:0.936px;left:744.8px;">Maren Franci</div>
<div class="a" style="left:744.5px;top:874.3px;width:60.5px;height:20.3px;border-radius:2px;background:#5147d8;color:#e6e6ff;font-size:11px;line-height:20.3px;text-align:center;letter-spacing:0.2px">Full leave</div>
<div class="t" style="top:876.0px;font-size:12.5px;color:#3b3b3b;line-height:18px;letter-spacing:0.153px;left:810.8px;">2024-04-18 | 9:55 AM</div>
<div class="t" style="top:852.4px;font-size:12.3px;color:#4a4a4a;line-height:18px;letter-spacing:0.374px;left:1070.5px;">2024-04-18 to 2024-04-18</div>
<div class="a" style="left:1070.3px;top:873.7px;width:64px;height:20.9px;border-radius:2px;background:#fea40b;color:#ffe2a8;font-size:11px;line-height:21px;text-align:center;letter-spacing:0.2px">Full Day</div>
<div class="t" style="top:875.5px;font-size:12.5px;color:#3b3b3b;line-height:18px;letter-spacing:0.283px;left:1139.8px;">8.50 Hr</div>
<div class="a" style="left:1432.5px;top:863.4px;width:64.5px;height:20.8px;border-radius:2px;background:#f28b2b;color:#fff0e0;font-size:11px;line-height:20.8px;text-align:center;letter-spacing:0.2px">Pending</div>
<div class="t" style="top:865.7px;font-size:12.3px;color:#4a4a4a;line-height:18px;letter-spacing:0.457px;left:1753.2px;">Having Sickness</div>
<div class="a" style="left:725px;top:908.5px;width:1195px;height:1px;background:#ececec"></div>
<div class="t" style="top:921.7px;font-size:14px;color:#3b3b3b;line-height:20px;letter-spacing:1.343px;left:744.8px;">Brandon Workman</div>
<div class="a" style="left:744.5px;top:945.8px;width:60.5px;height:20.3px;border-radius:2px;background:#5147d8;color:#e6e6ff;font-size:11px;line-height:20.3px;text-align:center;letter-spacing:0.2px">Full leave</div>
<div class="t" style="top:948.0px;font-size:12.5px;color:#3b3b3b;line-height:18px;letter-spacing:0.153px;left:810.8px;">2024-04-18 | 9:55 AM</div>
<div class="t" style="top:923.0px;font-size:12.3px;color:#4a4a4a;line-height:18px;letter-spacing:0.374px;left:1070.5px;">2024-04-18 to 2024-04-18</div>
<div class="a" style="left:1070.3px;top:944.3px;width:64px;height:20.9px;border-radius:2px;background:#fea40b;color:#ffe2a8;font-size:11px;line-height:21px;text-align:center;letter-spacing:0.2px">Full Day</div>
<div class="t" style="top:946.6px;font-size:12.5px;color:#3b3b3b;line-height:18px;letter-spacing:0.283px;left:1139.8px;">8.50 Hr</div>
<div class="a" style="left:1432.5px;top:934.1px;width:65.5px;height:20.8px;border-radius:2px;background:#f28b2b;color:#fff0e0;font-size:11px;line-height:20.8px;text-align:center;letter-spacing:0.2px">Pending</div>
<div class="t" style="top:936.4px;font-size:12.3px;color:#4a4a4a;line-height:18px;letter-spacing:0.457px;left:1753.8px;">Having Sickness</div>
<div class="card" style="left:138px;top:1010px;width:1800px;height:252px;"></div>
<div class="ibox" style="left:155.4px;top:1025.7px;background:#fdf1e7"></div>
<svg class="a" style="left:155.4px;top:1025.7px" width="50" height="50" viewBox="0 0 50 50">
<rect x="9.6" y="8.8" width="24.6" height="30.5" rx="2.5" fill="#e2e2e6" stroke="#d8b46e" stroke-width="1.3"/>
<path d="M17.3 10.8 Q17.3 6.3 21.5 6.3 Q25.8 6.3 25.8 10.8 Z" fill="#e1b24f"/>
<g fill="#48484b"><rect x="15.6" y="14.6" width="12.5" height="3.3"/><rect x="13.7" y="20.3" width="16.6" height="3.5"/><rect x="13.7" y="25.7" width="16.6" height="3.6"/><rect x="13.7" y="31.4" width="9.7" height="3.5"/></g>
<g transform="translate(31.9,34.7)" fill="#238ae0"><circle r="6.6"/><circle cx="6.60" cy="0.00" r="1.3"/><circle cx="5.72" cy="3.30" r="1.3"/><circle cx="3.30" cy="5.72" r="1.3"/><circle cx="-0.00" cy="6.60" r="1.3"/><circle cx="-3.30" cy="5.72" r="1.3"/><circle cx="-5.72" cy="3.30" r="1.3"/><circle cx="-6.60" cy="-0.00" r="1.3"/><circle cx="-5.72" cy="-3.30" r="1.3"/><circle cx="-3.30" cy="-5.72" r="1.3"/><circle cx="0.00" cy="-6.60" r="1.3"/><circle cx="3.30" cy="-5.72" r="1.3"/><circle cx="5.72" cy="-3.30" r="1.3"/></g>
<path d="M28.6 34.7 L31.1 37.1 L35.2 32.5" stroke="#fff" stroke-width="2" fill="none" stroke-linecap="round"/>
</svg>
<div class="t" style="top:1038.4px;font-size:19.6px;color:#3f4259;line-height:26px;letter-spacing:0.825px;left:214.5px;-webkit-text-stroke:0.45px #3f4259">Pending Approvals</div>
<div class="t" style="top:1041.0px;font-size:13.5px;color:#1e1e1e;line-height:20px;letter-spacing:0.283px;left:1769px;">Apply For all</div>
<svg class="a" style="left:1863.7px;top:1043px" width="15" height="16" viewBox="0 0 15 16"><path d="M1.2 2.2 Q1 0.5 2.8 0.5 L12.2 0.5 Q14 0.5 13.6 2.2 L8.6 8.5 L8.6 15 L6.2 13.6 L6.2 8.5 Z" fill="#3a3a3a"/></svg>
<svg class="a" style="left:1890px;top:1043px" width="16" height="16" viewBox="0 0 16 16"><g fill="none" stroke="#3a3a3a" stroke-width="1.5" stroke-linecap="round"><path d="M1.6 7.2 A6.2 6.2 0 0 1 12.6 3.7"/><path d="M14.3 8.2 A6.2 6.2 0 0 1 3.4 11.8"/></g><path d="M13.7 0.4 L14.1 5 L9.4 4.5 Z" fill="#3a3a3a"/><path d="M2.2 15.2 L1.9 10.6 L6.6 11 Z" fill="#3a3a3a"/></svg>
<div class="a" style="left:154.6px;top:1108px;width:206.0px;height:124px;border:1px solid #e9e9e9;border-radius:10px;background:#fff"></div>
<div class="t" style="top:1121.6px;font-size:16px;color:#5a5a5a;line-height:22px;letter-spacing:1.508px;left:174.4px;-webkit-text-stroke:0.3px #5a5a5a">Manager Review</div>
<div class="a" style="left:174.1px;top:1181px;width:32px;height:32px"><svg width="32" height="32" viewBox="0 0 32 32" fill="#5a4fe3"><circle cx="21.5" cy="6.7" r="5.5"/><path d="M14.7 24.7 L14.7 21 C14.7 17 18 14.8 22.3 14.8 C26.7 14.8 30 17 30 21 L30 24.7 Z"/><circle cx="9.1" cy="11.8" r="6.6" fill="#fff"/><path d="M-1.2 31 L-1.2 28.5 C-1.2 22 3.5 18.8 9.2 18.8 C14.9 18.8 19.6 22 19.6 28.5 L19.6 31 Z" fill="#fff"/><circle cx="9.1" cy="11.8" r="5.4"/><path d="M0 31 L0 28.8 C0 23 4 20 9.2 20 C14.4 20 18.4 23 18.4 28.8 L18.4 31 Z"/></svg></div>
<div class="t" style="top:1176.2px;font-size:32.5px;color:#62637a;line-height:36px;font-weight:bold;left:223.39999999999998px;transform:scaleX(0.9520);transform-origin:0 0;">15</div>
<div class="a" style="left:375.4px;top:1108px;width:205.3px;height:124px;border:1px solid #e9e9e9;border-radius:10px;background:#fff"></div>
<div class="t" style="top:1120.0px;font-size:16px;color:#5a5a5a;line-height:22px;letter-spacing:1.3px;left:398.5px;-webkit-text-stroke:0.3px #5a5a5a">Review Log</div>
<div class="t" style="top:1137.6px;font-size:16px;color:#5a5a5a;line-height:22px;letter-spacing:1.354px;left:398.5px;-webkit-text-stroke:0.3px #5a5a5a">Regularization</div>
<div class="a" style="left:398.2px;top:1181px;width:32px;height:32px"><svg width="32" height="32" viewBox="0 0 32 32" fill="#73a6f8"><path d="M4.2 0.7 L11.9 0.7 L11.9 9 Q11.9 13 15.9 13 L24.1 13 L24.1 26.9 Q24.1 30.9 20.1 30.9 L4.2 30.9 Q0.2 30.9 0.2 26.9 L0.2 4.7 Q0.2 0.7 4.2 0.7 Z"/><path d="M14.9 1.8 L22.3 10.2 L14.9 10.2 Z"/><g stroke="#fff" stroke-width="2.8" stroke-linecap="round"><path d="M6.4 19.5 L16.7 19.5 M6.4 24.5 L13.5 24.5"/></g></svg></div>
<div class="t" style="top:1176.2px;font-size:32.5px;color:#62637a;line-height:36px;font-weight:bold;left:447.7px;transform:scaleX(0.9520);transform-origin:0 0;">15</div>
<div class="a" style="left:595.5px;top:1108px;width:206.0px;height:124px;border:1px solid #e9e9e9;border-radius:10px;background:#fff"></div>
<div class="t" style="top:1121.7px;font-size:16px;color:#5a5a5a;line-height:22px;letter-spacing:1.493px;left:617.7px;-webkit-text-stroke:0.3px #5a5a5a">Resign Approvals</div>
<div class="a" style="left:617.4px;top:1181px;width:32px;height:32px"><svg width="32" height="32" viewBox="0 0 32 32"><g fill="#68d784"><circle cx="14.9" cy="15.9" r="12"/><circle cx="26.50" cy="15.90" r="3.3"/><circle cx="24.28" cy="22.72" r="3.3"/><circle cx="18.48" cy="26.93" r="3.3"/><circle cx="11.32" cy="26.93" r="3.3"/><circle cx="5.52" cy="22.72" r="3.3"/><circle cx="3.30" cy="15.90" r="3.3"/><circle cx="5.52" cy="9.08" r="3.3"/><circle cx="11.32" cy="4.87" r="3.3"/><circle cx="18.48" cy="4.87" r="3.3"/><circle cx="24.28" cy="9.08" r="3.3"/></g><path d="M9.6 16.4 L13.4 20.2 L20.3 12.4" stroke="#fff" stroke-width="2.6" fill="none" stroke-linecap="round" stroke-linejoin="round"/></svg></div>
<div class="t" style="top:1176.2px;font-size:32.5px;color:#62637a;line-height:36px;font-weight:bold;left:666.7px;transform:scaleX(0.9520);transform-origin:0 0;">15</div>
<div class="a" style="left:815.9px;top:1108px;width:206.7px;height:124px;border:1px solid #e9e9e9;border-radius:10px;background:#fff"></div>
<div class="t" style="top:1121.4px;font-size:16px;color:#5a5a5a;line-height:22px;letter-spacing:1.782px;left:838.2px;-webkit-text-stroke:0.3px #5a5a5a">Interviews pending</div>
<div class="a" style="left:837.9px;top:1181px;width:32px;height:32px"><svg width="32" height="32" viewBox="0 0 32 32" fill="#b99e84"><path d="M3.4 1.1 L13.7 1.1 Q16.7 1.1 16.7 4.1 L16.7 10.8 L17.8 12.8 L3.4 12.6 Q0.4 12.6 0.4 9.6 L0.4 4.1 Q0.4 1.1 3.4 1.1 Z"/><g stroke="#fff" stroke-width="1.6"><path d="M3.9 5.4 L10.9 5.4 M3.9 8.9 L8.2 8.9"/></g><circle cx="23.1" cy="6.6" r="3.7"/><path d="M18.1 15.1 C18.6 12 20.5 10.8 23.2 10.8 C26 10.8 27.9 12 28.4 15.1 Z"/><circle cx="7.1" cy="18.5" r="4"/><path d="M0.2 30.9 L0.2 29 C0.6 25.3 3.3 23.6 7.1 23.6 C10.9 23.6 13.6 25.3 14 29 L14 30.9 Z"/><path d="M12.9 17.2 L30.2 17.2 L30.2 30 L28.5 29 L14.6 29 C14.3 25.5 13.5 22.8 11.4 21.2 Q13.2 19.5 12.9 17.2 Z"/></svg></div>
<div class="t" style="top:1175.9px;font-size:32.5px;color:#62637a;line-height:36px;font-weight:bold;left:887.5px;transform:scaleX(1.0926);transform-origin:0 0;">5</div>
<div class="a" style="left:1037.3px;top:1108px;width:198.8px;height:124px;border:1px solid #e9e9e9;border-radius:10px;background:#fff"></div>
<div class="t" style="top:1119.8px;font-size:16px;color:#5a5a5a;line-height:22px;letter-spacing:1.425px;left:1059.6px;-webkit-text-stroke:0.3px #5a5a5a">Follow-up Pending</div>
<div class="a" style="left:1059.3px;top:1181px;width:32px;height:32px"><svg width="32" height="32" viewBox="0 0 32 32" fill="#c38ab3"><path d="M0.2 10.8 L0.2 8.1 Q0.2 3.6 4.7 3.6 L25.5 3.6 Q30 3.6 30 8.1 L30 10.8 Z"/><rect x="8" y="0.8" width="2.2" height="4" rx="1"/><rect x="20.4" y="0.8" width="2.2" height="4" rx="1"/><path d="M0.2 13.3 L13.8 13.3 A11.2 11.2 0 0 0 13.8 30.9 L4.7 30.9 Q0.2 30.9 0.2 26.4 Z"/><circle cx="21.3" cy="22.3" r="8.7"/><path d="M20.7 18.8 L21.5 22.5 L23.3 24.8" stroke="#fff" stroke-width="2" fill="none" stroke-linecap="round"/></svg></div>
<div class="t" style="top:1175.9px;font-size:32.5px;color:#62637a;line-height:36px;font-weight:bold;left:1108.9px;transform:scaleX(0.9610);transform-origin:0 0;">15</div>
<div class="a" style="left:1250.5px;top:1108px;width:206.0px;height:124px;border:1px solid #e9e9e9;border-radius:10px;background:#fff"></div>
<div class="t" style="top:1119.8px;font-size:16px;color:#5a5a5a;line-height:22px;letter-spacing:1.118px;left:1273px;-webkit-text-stroke:0.3px #5a5a5a">Loan Request</div>
<div class="a" style="left:1272.7px;top:1181px;width:32px;height:32px"><svg width="32" height="32" viewBox="0 0 32 32"><circle cx="15.1" cy="16" r="14.8" fill="#ab5f57"/><g stroke="#fff" stroke-width="2.1" fill="none" stroke-linecap="round" stroke-linejoin="round"><path d="M9.3 9.4 L20.6 9.4 M9.3 13.3 L20.6 13.3 M13.6 9.4 Q18 9.8 17.8 13.3 Q17.2 17 9.6 17.2 L17.8 24.8"/></g></svg></div>
<div class="t" style="top:1175.9px;font-size:32.5px;color:#62637a;line-height:36px;font-weight:bold;left:1322.4px;transform:scaleX(1.2065);transform-origin:0 0;">0</div>
<div class="a" style="left:1471.4px;top:1108px;width:205.3px;height:124px;border:1px solid #e9e9e9;border-radius:10px;background:#fff"></div>
<div class="t" style="top:1123.0px;font-size:16px;color:#5a5a5a;line-height:22px;letter-spacing:0.844px;left:1493.3px;-webkit-text-stroke:0.3px #5a5a5a">Salary Slip Request</div>
<div class="a" style="left:1493.0px;top:1181px;width:32px;height:32px"><svg width="32" height="32" viewBox="0 0 32 32" fill="#6a9bfa"><path d="M3.6 2 L25.5 2 Q29 2 29 5.5 L29 29 Q27.5 31.6 25 30.3 Q22.5 28.8 19.8 30.6 Q17 32.6 14 30.8 Q11.2 28.9 8.5 30.7 Q5.5 32.4 3.3 30.7 Q0.1 31 0.1 28 L0.1 5.5 Q0.1 2 3.6 2 Z"/><g stroke="#fff" stroke-width="3" stroke-linecap="round"><path d="M7.6 9.4 L21.8 9.4 M7.6 15.3 L21.8 15.3 M7.6 21.3 L15 21.3"/></g></svg></div>
<div class="t" style="top:1179.8px;font-size:32.5px;color:#62637a;line-height:36px;font-weight:bold;left:1543.1000000000001px;transform:scaleX(1.1006);transform-origin:0 0;">20</div>
<div class="a" style="left:1691.6px;top:1108px;width:213.4px;height:124px;border:1px solid #e9e9e9;border-radius:10px;background:#fff"></div>
<div class="t" style="top:1123.5px;font-size:16px;color:#5a5a5a;line-height:22px;letter-spacing:1.17px;left:1714.8px;-webkit-text-stroke:0.3px #5a5a5a">Log Request</div>
<div class="a" style="left:1714.5px;top:1181px;width:32px;height:32px"><svg width="32" height="32" viewBox="0 0 32 32" fill="none" stroke="#43c7f2" stroke-width="3.8" stroke-linecap="round"><path d="M14.9 1.8 L14.9 7.8"/><path d="M8.2 5.1 A12.9 12.9 0 1 0 21.6 5.1"/></svg></div>
<div class="t" style="top:1179.8px;font-size:32.5px;color:#62637a;line-height:36px;font-weight:bold;left:1764.0px;transform:scaleX(1.1257);transform-origin:0 0;">30</div>
</div></div>
</body></html>
